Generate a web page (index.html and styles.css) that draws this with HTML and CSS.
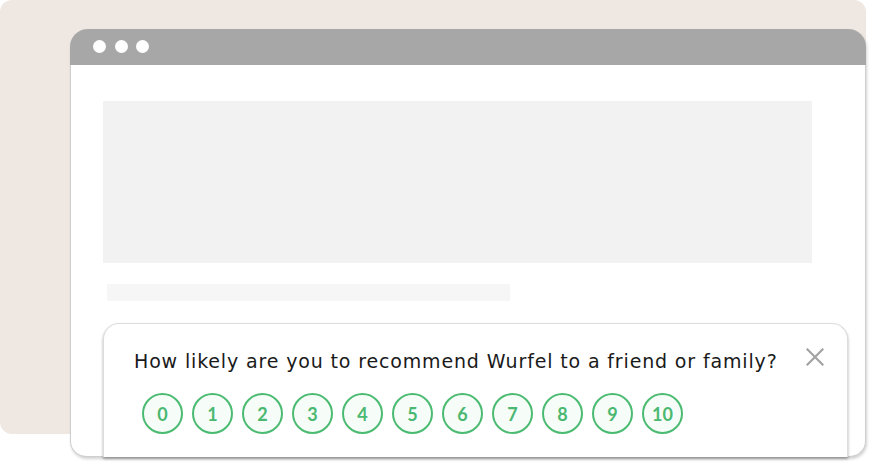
FILE: index.html
```html
<!DOCTYPE html>
<html>
<head>
<meta charset="utf-8">
<link rel="stylesheet" href="styles.css">
</head>
<body>
<div class="stage">
  <div class="backdrop"></div>
  <div class="window">
    <div class="titlebar">
      <span class="dot"></span><span class="dot"></span><span class="dot"></span>
    </div>
    <div class="content">
      <div class="hero"></div>
      <div class="line"></div>
      <div class="survey">
        <div class="survey-head">
          <p class="question">How likely are you to recommend Wurfel to a friend or family?</p>
          <svg class="close" width="18" height="18" viewBox="0 0 18 18"><path d="M1.5 1.5 L16.5 16.5 M16.5 1.5 L1.5 16.5" stroke="#a3a3a3" stroke-width="2.2" stroke-linecap="square"/></svg>
        </div>
        <div class="scale">
          <span class="num">0</span><span class="num">1</span><span class="num">2</span><span class="num">3</span><span class="num">4</span><span class="num">5</span><span class="num">6</span><span class="num">7</span><span class="num">8</span><span class="num">9</span><span class="num">10</span>
        </div>
      </div>
    </div>
  </div>
</div>
</body>
</html>
```

FILE: styles.css
```css
html, body {
  margin: 0;
  padding: 0;
  background: #ffffff;
}
.stage {
  display: grid;
  width: 873px;
  height: 465px;
  overflow: hidden;
}
.backdrop {
  grid-area: 1 / 1;
  width: 866px;
  height: 434px;
  background: #efe8e2;
  border-radius: 12px;
}
.window {
  grid-area: 1 / 1;
  margin-left: 70px;
  margin-top: 29px;
  width: 796px;
  height: 428px;
  box-sizing: border-box;
  background: #ffffff;
  border-radius: 18px 18px 16px 16px;
  border: 1px solid #cfcfcf;
  border-top: none;
  box-shadow: 1px 2px 3px rgba(0,0,0,0.18);
  display: flex;
  flex-direction: column;
}
.titlebar {
  height: 36px;
  flex: none;
  background: #a7a7a7;
  border-radius: 18px 18px 0 0;
  margin: 0 -1px;
  display: flex;
  align-items: center;
  gap: 8.5px;
  padding-left: 23px;
  padding-bottom: 2px;
  box-sizing: border-box;
}
.dot {
  width: 13px;
  height: 13px;
  border-radius: 50%;
  background: #ffffff;
}
.content {
  flex: 1;
  display: flex;
  flex-direction: column;
  align-items: flex-start;
  padding: 36px 0 0 32px;
}
.hero {
  width: 709px;
  height: 162px;
  background: #f2f2f2;
}
.line {
  width: 403px;
  height: 17px;
  margin: 21px 0 0 4px;
  background: #f6f6f6;
}
.survey {
  margin-top: 22px;
  width: 745px;
  height: 134px;
  box-sizing: border-box;
  background: #ffffff;
  border: 1px solid #dcdcdc;
  border-bottom: none;
  border-radius: 16px 16px 0 0;
  box-shadow: 0 2px 3px rgba(0,0,0,0.32);
  padding: 22px 23px 0 30px;
  position: relative;
  z-index: 1;
}
.survey-head {
  display: flex;
  justify-content: space-between;
  align-items: flex-start;
}
.question {
  margin: 0;
  font-family: "DejaVu Sans", "Noto Sans", sans-serif;
  font-size: 19px;
  line-height: 30px;
  color: #1a1a1a;
  letter-spacing: 0.85px;
  white-space: nowrap;
}
.close {
  margin-top: 2px;
}
.scale {
  display: flex;
  gap: 9px;
  margin-top: 17px;
  padding-left: 8px;
}
.num {
  width: 41px;
  height: 41px;
  box-sizing: border-box;
  border: 2px solid #4cbb72;
  border-radius: 50%;
  background: #f6fcf8;
  display: flex;
  align-items: center;
  justify-content: center;
  font-family: "Lato", sans-serif;
  font-weight: 700;
  font-size: 18px;
  color: #4bb872;
}
```
